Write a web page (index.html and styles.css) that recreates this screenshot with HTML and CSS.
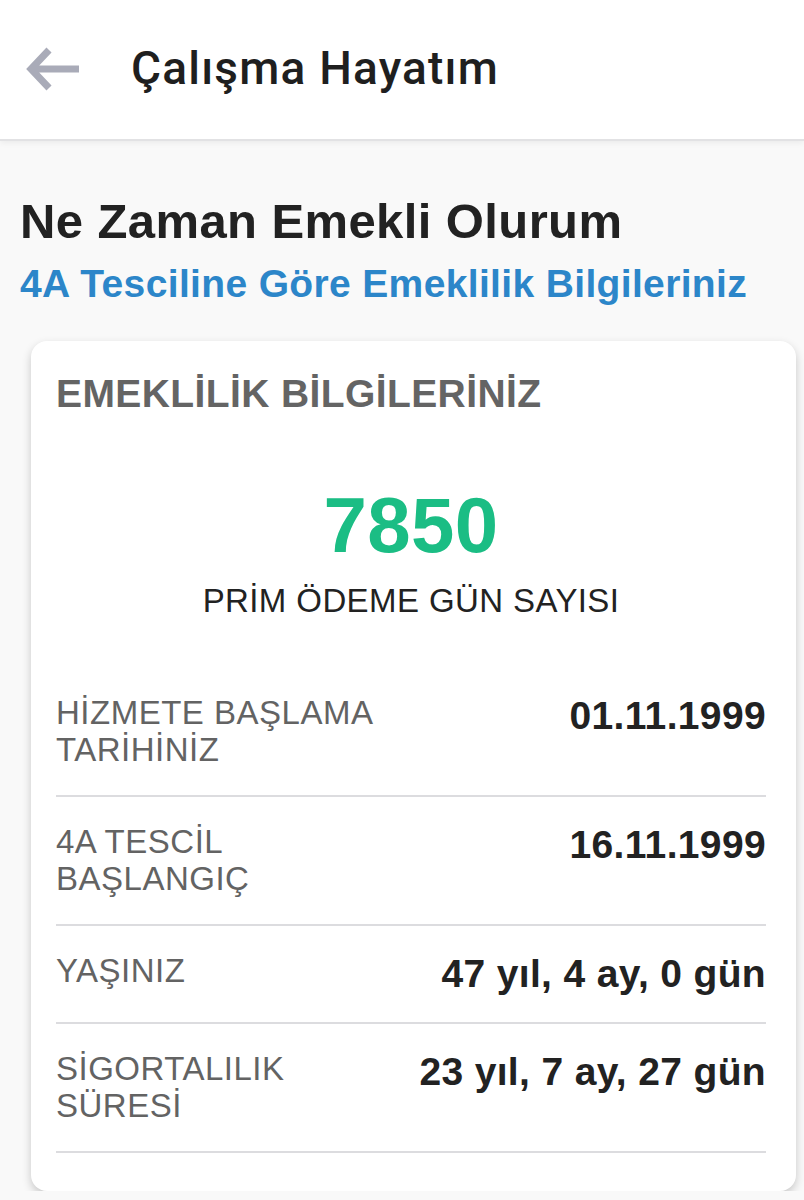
FILE: index.html
```html
<!DOCTYPE html>
<html lang="tr">
<head>
  <meta charset="UTF-8" />
  <meta name="viewport" content="width=device-width, initial-scale=1.0" />
  <title>Çalışma Hayatım</title>
  <link rel="stylesheet" href="styles.css">
</head>
<body>
  <div class="topbar">
    <svg class="back" width="58" height="48" viewBox="0 0 58 48">
      <path d="M26 5 L8 24 L26 43 M8 24 H56" fill="none" stroke="#a9abb8" stroke-width="7" />
    </svg>
    <div class="topbar-title">Çalışma Hayatım</div>
  </div>

  <div class="content">
    <h1>Ne Zaman Emekli Olurum</h1>
    <div class="subtitle">4A Tesciline Göre Emeklilik Bilgileriniz</div>

    <div class="card">
      <div class="card-title">EMEKLİLİK BİLGİLERİNİZ</div>
      <div class="big-number">7850</div>
      <div class="big-label">PRİM ÖDEME GÜN SAYISI</div>

      <div class="row">
        <div class="row-label">HİZMETE BAŞLAMA<br>TARİHİNİZ</div>
        <div class="row-value">01.11.1999</div>
      </div>
      <div class="row">
        <div class="row-label">4A TESCİL<br>BAŞLANGIÇ</div>
        <div class="row-value">16.11.1999</div>
      </div>
      <div class="row">
        <div class="row-label">YAŞINIZ</div>
        <div class="row-value">47 yıl, 4 ay, 0 gün</div>
      </div>
      <div class="row">
        <div class="row-label">SİGORTALILIK<br>SÜRESİ</div>
        <div class="row-value">23 yıl, 7 ay, 27 gün</div>
      </div>
    </div>
  </div>
</body>
</html>
```

FILE: styles.css
```css
body {
  margin: 0;
  font-family: "Liberation Sans", Arial, sans-serif;
  background-color: #f9f9f9;
  color: #222;
  letter-spacing: 0.4px;
}

.topbar {
  height: 139px;
  background: white;
  border-bottom: 2px solid #e2e2e4;
  box-shadow: 0 2px 6px rgba(0,0,0,0.06);
  display: flex;
  align-items: center;
}

.back {
  margin-left: 23px;
  margin-top: -2px;
}

.topbar-title {
  margin-left: 50px;
  font-family: Roboto, sans-serif;
  font-size: 46px;
  font-weight: 500;
  color: #1f1f1f;
  letter-spacing: 1.2px;
  margin-top: -4px;
}

.content {
  padding: 0 8px 0 20px;
}

h1 {
  margin: 52px 0 0;
  font-size: 49px;
  font-weight: 700;
  color: #222;
  line-height: 56px;
}

.subtitle {
  font-size: 39px;
  font-weight: 700;
  color: #2c86c9;
  line-height: 45px;
  margin-top: 12px;
  letter-spacing: 0.35px;
}

.card {
  margin: 35px 0 0 11px;
  background: white;
  border-radius: 16px;
  box-shadow: 0 4px 10px rgba(0,0,0,0.2);
  padding: 30px 30px 38px 25px;
}

.card-title {
  font-size: 39px;
  font-weight: 700;
  color: #646464;
  line-height: 45px;
}

.big-number {
  text-align: center;
  font-size: 78px;
  font-weight: 700;
  color: #1bbd84;
  line-height: 90px;
  margin-top: 64px;
}

.big-label {
  text-align: center;
  font-size: 33px;
  color: #222;
  line-height: 38px;
  margin-top: 12px;
  margin-bottom: 48px;
}

.row {
  display: flex;
  justify-content: space-between;
  align-items: flex-start;
  border-bottom: 2px solid #dcdcdf;
  padding: 27px 0 27px;
}

.row-label {
  font-size: 33px;
  color: #636363;
  line-height: 36.5px;
  letter-spacing: 0.5px;
}

.row-value {
  font-size: 39px;
  font-weight: 700;
  color: #222;
  line-height: 42px;
  text-align: right;
  letter-spacing: 0.35px;
}
```
